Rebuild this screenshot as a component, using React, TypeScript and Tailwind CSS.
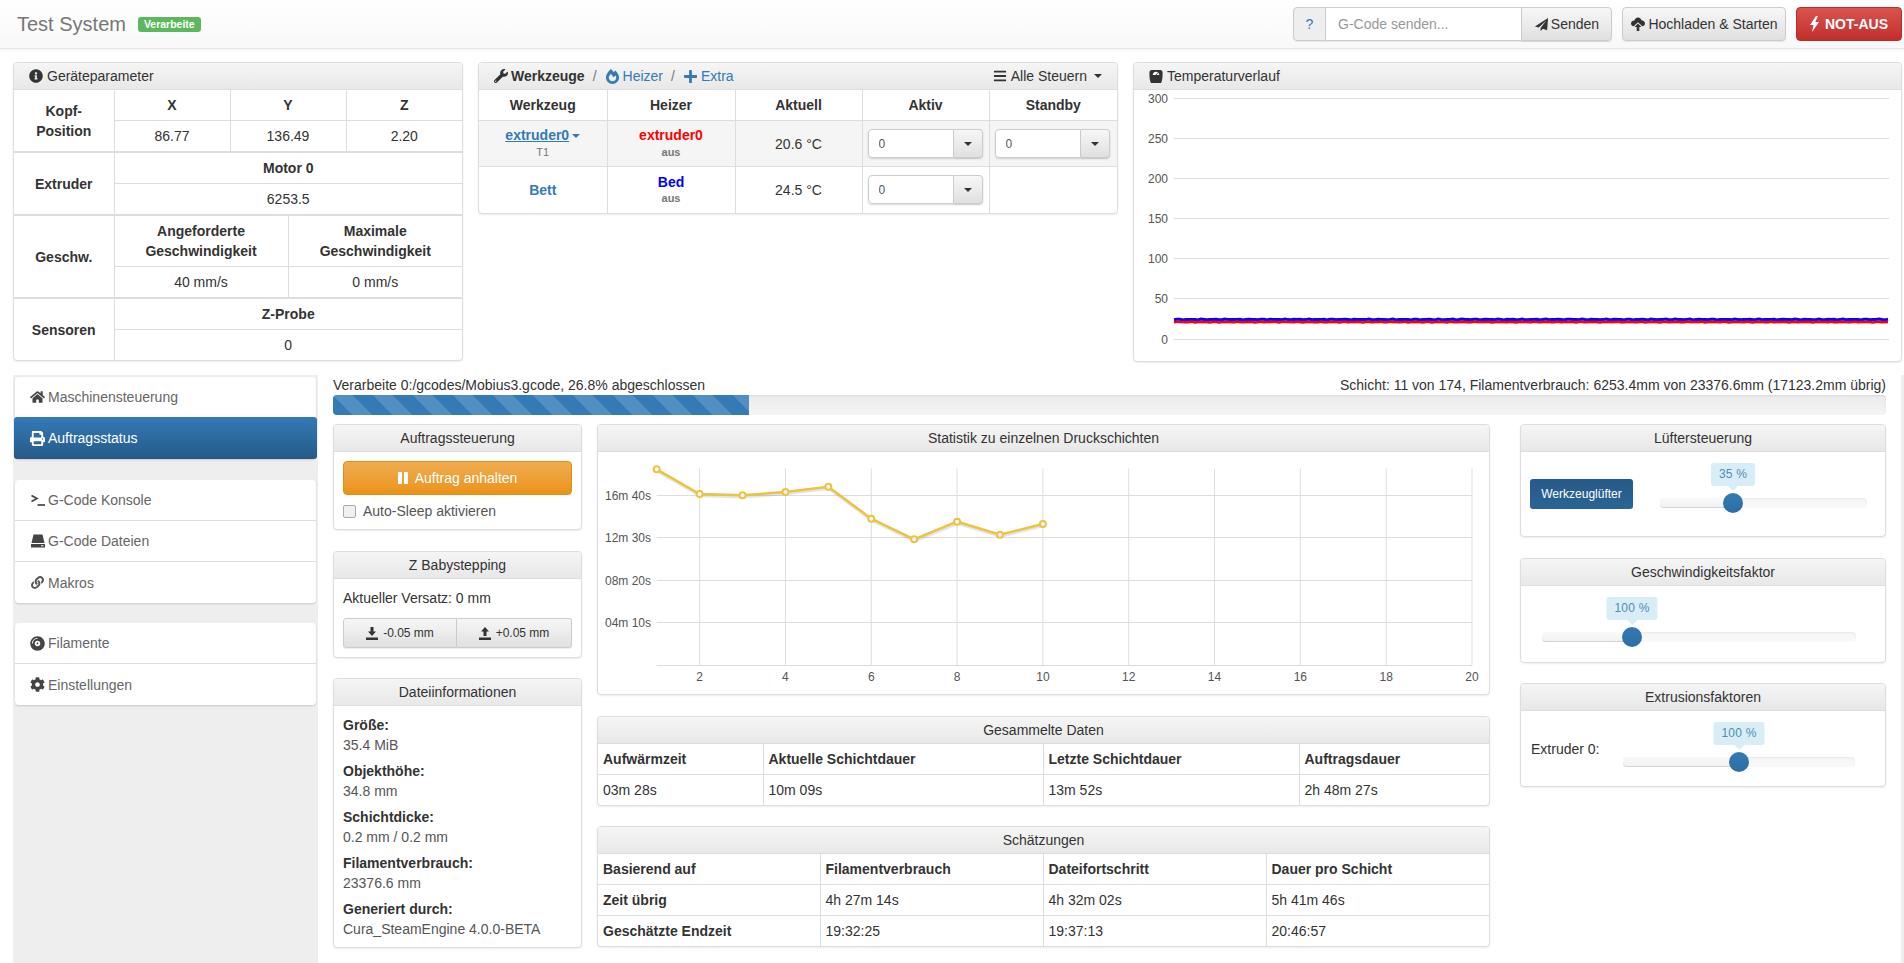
import type { ReactNode } from "react"
import { FaBars, FaCog, FaCompactDisc, FaFireAlt, FaHome, FaInfoCircle, FaLink, FaPlus, FaPrint, FaWrench } from "react-icons/fa"

const heading = "h-[27px] border-b border-[#ddd] bg-gradient-to-b from-[#f5f5f5] to-[#e8e8e8] rounded-t-[3px] leading-[26px]"
const panel = "rounded-[4px] border border-[#ddd] bg-white shadow-[0_1px_2px_rgba(0,0,0,0.075)]"
const tableCls =
  "w-full table-fixed border-collapse [&_td]:border [&_td]:border-[#ddd] [&_td]:p-[5px] [&_th]:border [&_th]:border-[#ddd] [&_th]:p-[5px] [&_tr>*:first-child]:border-l-0 [&_tr>*:last-child]:border-r-0 [&_tr:first-child>*]:border-t-0 [&_tbody:last-child_tr:last-child>*]:border-b-0"
const btnDefault =
  "flex items-center justify-center border border-[#ccc] bg-gradient-to-b from-[#f7f7f7] to-[#e0e0e0] text-[#333] shadow-[0_1px_1px_rgba(0,0,0,0.075)]"

function Caret({ className = "border-t-[#333]" }: { className?: string }) {
  return <span className={`inline-block h-0 w-0 border-x-[4px] border-t-[4px] border-x-transparent ${className}`} />
}

function GaugeIcon() {
  return (
    <svg viewBox="0 0 14 16" className="h-[15px] w-[14px]">
      <path d="M2.5 1h9C13 1 14 2 14 3.5V7c0 3-.6 5.5-1.2 7-.3.8-1 1-1.8 1H3c-.8 0-1.5-.2-1.8-1C.6 12.5 0 10 0 7V3.5C0 2 1 1 2.5 1z" fill="#333" />
      <path d="M3.5 6.5C3.5 4.5 5 3 7 3s3.5 1.5 3.5 3.5z" fill="#fff" />
      <path d="M6.5 6.2 9 3.8l.5.5L7.3 6.5z" fill="#333" />
    </svg>
  )
}

function SendIcon() {
  return (
    <svg viewBox="0 0 16 16" className="h-[15px] w-[15px]" fill="#333">
      <path d="M15 1 1 10l4 1.2L13 4 7 11.8V15l2.5-2.500 4.500 1.500z" />
    </svg>
  )
}

function CloudUpIcon() {
  return (
    <svg viewBox="0 0 16 16" className="h-[16px] w-[16px]" fill="#333">
      <path d="M8 1.500c2 0 3.200 1.500 3.400 2.800 1.800 0 3.600 1.300 3.600 3.200 0 1.700-1.400 2.800-2.700 2.800L8 6.200l-4.300 4.100C2.200 10.300 1 9 1 7.500 1 5.700 2.700 4.500 4.400 4.500 4.800 3 6.200 1.500 8 1.500z" />
      <path d="m8 7.500 3.500 3.500H9.300v4H6.700v-4H4.500z" />
    </svg>
  )
}

function BoltIcon() {
  return (
    <svg viewBox="0 0 9 16" className="h-[16px] w-[9px]" fill="#fff">
      <path d="M6 0 0 9h3.500L2 16l7-10H5.300L8 0z" />
    </svg>
  )
}

function ConsoleIcon() {
  return (
    <svg viewBox="0 0 14 14" className="h-[14px] w-[14px]" fill="none" stroke="#444" strokeWidth="1.7">
      <path d="M0.500 2.500 6 5.500 0.500 8.500" />
      <path d="M6.500 12h7.500" />
    </svg>
  )
}

function HddIcon() {
  return (
    <svg viewBox="0 0 14 14" className="h-[14px] w-[14px]" fill="#444">
      <path d="M2.500 0.500h9L13.500 9h-13z" />
      <path d="M0 10h14v3.500H0zM10 11.200v1h2.500v-1z" fillRule="evenodd" />
    </svg>
  )
}

function TrayArrow({ up }: { up?: boolean }) {
  return (
    <svg viewBox="0 0 12 13" className="h-[13px] w-[12px]" fill="#333">
      <path d={up ? "M6 0 10 4.500H7.500V9h-3V4.500H2z" : "M4.500 0h3v4.500H10L6 9 2 4.500h2.500z"} />
      <path d="M0 10.500h12V13H0z" />
    </svg>
  )
}

function Panel({ title, className = "", children }: { title: ReactNode; className?: string; children: ReactNode }) {
  return (
    <div className={`${panel} ${className}`}>
      <div className={`${heading} text-center`}>{title}</div>
      {children}
    </div>
  )
}

function SelectBox() {
  return (
    <div className="flex h-[29px] w-[115px] rounded-[4px] shadow-[0_1px_2px_rgba(0,0,0,0.15)]">
      <input
        defaultValue="0"
        className="h-full w-[86px] rounded-l-[4px] border border-[#ccc] bg-white px-[10px] text-[12px] text-[#555] outline-none"
      />
      <div className={`${btnDefault} h-full w-[29px] rounded-r-[4px] border-l-0`}>
        <Caret />
      </div>
    </div>
  )
}

function Slider({ label, width, pos, left }: { label: string; width: number; pos: number; left: number }) {
  return (
    <div
      className="relative mt-[46px] h-[10px] shrink-0 rounded-[4px] bg-gradient-to-b from-[#f5f5f5] to-[#f9f9f9] shadow-[inset_0_1px_2px_rgba(0,0,0,0.06)]"
      style={{ width, marginLeft: left }}
    >
      <div
        className="absolute inset-y-0 left-0 rounded-l-[4px] bg-gradient-to-b from-[#f9f9f9] to-[#f2f2f2] shadow-[inset_0_-1px_0_rgba(0,0,0,0.12)]"
        style={{ width: pos }}
      />
      <div
        className="absolute top-[-5px] h-5 w-5 -translate-x-1/2 rounded-full bg-gradient-to-b from-[#337ab7] to-[#2e6da4]"
        style={{ left: pos }}
      />
      <div
        className="absolute top-[-35.500px] flex h-[23px] -translate-x-1/2 items-center whitespace-nowrap rounded-[3px] bg-[#d9edf7] px-2 text-[12px] tracking-[0.2px] text-[#4f8db3]"
        style={{ left: pos }}
      >
        {label}
        <span className="absolute left-1/2 top-[23px] h-0 w-0 -translate-x-1/2 border-x-[5px] border-t-[5px] border-x-transparent border-t-[#d9edf7]" />
      </div>
    </div>
  )
}

function TempChart() {
  const grid = [
    { label: "300", y: 8.5 },
    { label: "250", y: 48.5 },
    { label: "200", y: 88.5 },
    { label: "150", y: 128.5 },
    { label: "100", y: 168.5 },
    { label: "50", y: 208.5 },
    { label: "0", y: 249.5 },
  ]
  const noisy = (base: number, seed: number) => {
    const pts: string[] = []
    for (let x = 40; x <= 755; x += 3) {
      const n = Math.sin(x * 0.9 + seed) * Math.cos(x * 0.37 + seed)
      pts.push(`${x},${(base + n * 0.5).toFixed(1)}`)
    }
    return pts.join(" ")
  }
  return (
    <svg width={767} height={271} className="block">
      {grid.map((g) => (
        <g key={g.label}>
          <line x1={40} x2={755} y1={g.y} y2={g.y} stroke="#ddd" strokeWidth={1.2} />
          <text x={34} y={g.y + 4} textAnchor="end" fontSize={12} fill="#545454">
            {g.label}
          </text>
        </g>
      ))}
      <polyline points={noisy(232.6, 2)} fill="none" stroke="#000" strokeOpacity={0.1} strokeWidth={3} />
      <polyline points={noisy(229.5, 1)} fill="none" stroke="#00f" strokeWidth={3} />
      <polyline points={noisy(232, 3)} fill="none" stroke="#f00" strokeWidth={2.5} />
    </svg>
  )
}

function LayerChart() {
  const step = (874 - 58.7) / 19
  const xAt = (n: number) => 58.7 + (n - 1) * step
  const gridY = [
    { label: "16m 40s", y: 43.5 },
    { label: "12m 30s", y: 85.5 },
    { label: "08m 20s", y: 128.5 },
    { label: "04m 10s", y: 170.5 },
  ]
  const values = [17.3, 42, 43.3, 40, 34.7, 66.7, 87.3, 69.7, 82.7, 72]
  const ticks = [2, 4, 6, 8, 10, 12, 14, 16, 18, 20]
  const line = values.map((y, i) => `${xAt(i + 1)},${y}`).join(" ")
  const shadow = values.map((y, i) => `${xAt(i + 1) + 0.5},${y + 2}`).join(" ")
  return (
    <svg width={891} height={242} className="block">
      {gridY.map((g) => (
        <g key={g.label}>
          <line x1={58.7} x2={874} y1={g.y} y2={g.y} stroke="#ddd" strokeWidth={1.2} />
          <text x={53} y={g.y + 4} textAnchor="end" fontSize={12} fill="#545454">
            {g.label}
          </text>
        </g>
      ))}
      {ticks.map((t) => (
        <g key={t}>
          <line x1={xAt(t)} x2={xAt(t)} y1={16.5} y2={213} stroke="#ddd" strokeWidth={1} />
          <text x={xAt(t)} y={229} textAnchor="middle" fontSize={12} fill="#545454">
            {t}
          </text>
        </g>
      ))}
      <line x1={58.7} x2={874} y1={213.5} y2={213.5} stroke="#ddd" strokeWidth={1.2} />
      <polyline points={shadow} fill="none" stroke="#000" strokeOpacity={0.1} strokeWidth={2.5} />
      <polyline points={line} fill="none" stroke="#edc240" strokeWidth={2.5} />
      {values.map((y, i) => (
        <circle key={i} cx={xAt(i + 1)} cy={y} r={3} fill="#fff" stroke="#edc240" strokeWidth={2} />
      ))}
    </svg>
  )
}

function NavItem({ icon, label, active, last, first }: { icon: ReactNode; label: string; active?: boolean; last?: boolean; first?: boolean }) {
  return (
    <div
      className={
        active
          ? "-mx-px flex h-[42px] items-center gap-[3px] rounded-[3px] bg-gradient-to-b from-[#337ab7] to-[#265a88] pl-[16px] text-white"
          : `flex ${first ? "h-[40px]" : "h-[41px]"} items-center gap-[3px] pl-[15px] text-[#666] ${last ? "" : "border-b border-[#ddd]"}`
      }
    >
      <span className="flex w-[15px] justify-center">{icon}</span>
      {label}
    </div>
  )
}

export default function App() {
  const navGroup = "mx-[2px] rounded-[4px] bg-white shadow-[0_1px_2px_rgba(0,0,0,0.15)]"
  const info = [
    ["Größe:", "35.4 MiB"],
    ["Objekthöhe:", "34.8 mm"],
    ["Schichtdicke:", "0.2 mm / 0.2 mm"],
    ["Filamentverbrauch:", "23376.6 mm"],
    ["Generiert durch:", "Cura_SteamEngine 4.0.0-BETA"],
  ]

  return (
    <div className="flex h-screen flex-col overflow-hidden bg-white font-['Liberation_Sans',Arial,sans-serif] text-[14px] leading-5 text-[#333]">
      {/* top bar */}
      <header className="flex h-[49px] shrink-0 items-center border-b border-[#e7e7e7] bg-gradient-to-b from-white to-[#f8f8f8] pl-[17px] pr-[2px] shadow-[0_1px_3px_rgba(0,0,0,0.05)]">
        <span className="text-[20px] text-[#777]">Test System</span>
        <span className="ml-[12px] rounded-[3px] bg-[#5cb85c] px-[6px] text-[10.500px] font-bold leading-[15px] text-white">Verarbeite</span>
        <div className="ml-auto flex h-[34px] rounded-[4px] shadow-[0_1px_1px_rgba(0,0,0,0.075)]">
          <div className="flex w-[33px] items-center justify-center rounded-l-[4px] border border-[#ccc] bg-[#eee] text-[#337ab7]">?</div>
          <input placeholder="G-Code senden..." className="w-[195px] border-y border-[#ccc] bg-white px-3 text-[14px] outline-none placeholder:text-[#999]" />
          <div className={`${btnDefault} w-[91px] gap-[2px] rounded-r-[4px]`}>
            <SendIcon />
            Senden
          </div>
        </div>
        <div className={`${btnDefault} ml-[10px] h-[34px] w-[164px] gap-[2px] rounded-[4px]`}>
          <CloudUpIcon />
          Hochladen &amp; Starten
        </div>
        <div className="ml-[10px] flex h-[34px] w-[106px] items-center justify-center gap-[6px] rounded-[4px] border border-[#b92c28] bg-gradient-to-b from-[#d9534f] to-[#c12e2a] font-bold text-white">
          <BoltIcon />
          NOT-AUS
        </div>
      </header>

      {/* upper panels */}
      <div className="mt-[13px] flex h-[300px] shrink-0 items-start gap-[15px] pl-[13px]">
        <div className={`${panel} w-[450px]`}>
          <div className={`${heading} flex items-center gap-[4px] pl-[15px] text-[#333]`}>
            <FaInfoCircle size={14} />
            Geräteparameter
          </div>
          <table className={`${tableCls} text-center`}>
            <colgroup>
              <col className="w-[100px]" />
              <col className="w-[116px]" />
              <col className="w-[58px]" />
              <col className="w-[58px]" />
              <col />
            </colgroup>
            <tbody>
              <tr>
                <th rowSpan={2}>Kopf-<br />Position</th>
                <th>X</th>
                <th colSpan={2}>Y</th>
                <th>Z</th>
              </tr>
              <tr>
                <td>86.77</td>
                <td colSpan={2}>136.49</td>
                <td>2.20</td>
              </tr>
            </tbody>
            <tbody className="border-t-2 border-[#ddd]">
              <tr>
                <th rowSpan={2}>Extruder</th>
                <th colSpan={4}>Motor 0</th>
              </tr>
              <tr>
                <td colSpan={4}>6253.5</td>
              </tr>
            </tbody>
            <tbody className="border-t-2 border-[#ddd]">
              <tr>
                <th rowSpan={2}>Geschw.</th>
                <th colSpan={2}>Angeforderte Geschwindigkeit</th>
                <th colSpan={2}>Maximale Geschwindigkeit</th>
              </tr>
              <tr>
                <td colSpan={2}>40 mm/s</td>
                <td colSpan={2}>0 mm/s</td>
              </tr>
            </tbody>
            <tbody className="border-t-2 border-[#ddd]">
              <tr>
                <th rowSpan={2} className="!border-b-0">Sensoren</th>
                <th colSpan={4}>Z-Probe</th>
              </tr>
              <tr>
                <td colSpan={4}>0</td>
              </tr>
            </tbody>
          </table>
        </div>

        <div className={`${panel} w-[640px]`}>
          <div className={`${heading} flex items-center pl-[15px] pr-[15px]`}>
            <FaWrench size={14} />
            <b className="ml-[3px]">Werkzeuge</b>
            <span className="mx-[8px] text-[#777]">/</span>
            <FaFireAlt size={15} className="text-[#337ab7]" />
            <span className="ml-[3px] text-[#337ab7]">Heizer</span>
            <span className="mx-[8px] text-[#777]">/</span>
            <FaPlus size={15} className="text-[#337ab7]" />
            <span className="ml-[3px] text-[#337ab7]">Extra</span>
            <span className="ml-auto flex items-center gap-[4px]">
              <FaBars size={14} />
              Alle Steuern
              <Caret className="ml-[3px] border-t-[#333]" />
            </span>
          </div>
          <table className={`${tableCls} text-center`}>
            <colgroup>
              <col className="w-[128px]" />
              <col className="w-[128px]" />
              <col className="w-[127px]" />
              <col className="w-[127px]" />
              <col />
            </colgroup>
            <tbody>
              <tr>
                <th>Werkzeug</th>
                <th>Heizer</th>
                <th>Aktuell</th>
                <th>Aktiv</th>
                <th>Standby</th>
              </tr>
              <tr className="h-[46px] bg-[#f5f5f5]">
                <td className="!py-0 leading-4">
                  <span className="font-bold text-[#337ab7] underline">extruder0</span>
                  <Caret className="ml-[3px] align-middle border-t-[#337ab7]" />
                  <div className="mt-px text-[11px] text-[#777]">T1</div>
                </td>
                <td className="!py-0 leading-4">
                  <div className="font-bold text-[#f00]">extruder0</div>
                  <div className="mt-px text-[11px] font-bold text-[#777]">aus</div>
                </td>
                <td>20.6 °C</td>
                <td><SelectBox /></td>
                <td><SelectBox /></td>
              </tr>
              <tr className="h-[46px]">
                <td className="font-bold text-[#337ab7]">Bett</td>
                <td className="!py-0 leading-4">
                  <div className="font-bold text-[#00f]">Bed</div>
                  <div className="text-[11px] font-bold text-[#777]">aus</div>
                </td>
                <td>24.5 °C</td>
                <td><SelectBox /></td>
                <td></td>
              </tr>
            </tbody>
          </table>
        </div>

        <div className={`${panel} w-[769px]`}>
          <div className={`${heading} flex items-center gap-[4px] pl-[15px]`}>
            <GaugeIcon />
            Temperaturverlauf
          </div>
          <TempChart />
        </div>
      </div>

      {/* lower area */}
      <div className="mt-[13px] flex min-h-0 flex-1 pl-[13px]">
        <aside className="w-[305px] shrink-0 bg-[#eee] pt-[2px]">
          <div className={navGroup}>
            <NavItem icon={<FaHome size={16} color="#444" />} label="Maschinensteuerung" first last />
            <NavItem icon={<FaPrint size={15} />} label="Auftragsstatus" active />
          </div>
          <div className={`${navGroup} mt-[21px]`}>
            <NavItem icon={<ConsoleIcon />} label="G-Code Konsole" />
            <NavItem icon={<HddIcon />} label="G-Code Dateien" />
            <NavItem icon={<FaLink size={13} color="#555" />} label="Makros" last />
          </div>
          <div className={`${navGroup} mt-[20px]`}>
            <NavItem icon={<FaCompactDisc size={15} color="#444" />} label="Filamente" />
            <NavItem icon={<FaCog size={15} color="#444" />} label="Einstellungen" last />
          </div>
        </aside>

        <main className="ml-[15px] w-[1553px] shrink-0">
          <div className="flex justify-between">
            <span>Verarbeite 0:/gcodes/Mobius3.gcode, 26.8% abgeschlossen</span>
            <span>Schicht: 11 von 174, Filamentverbrauch: 6253.4mm von 23376.6mm (17123.2mm übrig)</span>
          </div>
          <div className="h-5 overflow-hidden rounded-[4px] bg-gradient-to-b from-[#ebebeb] to-[#f5f5f5] shadow-[inset_0_1px_2px_rgba(0,0,0,0.08)]">
            <div className="h-full w-[26.8%] bg-[#337ab7] bg-[linear-gradient(45deg,rgba(255,255,255,0.15)_25%,transparent_25%,transparent_50%,rgba(255,255,255,0.15)_50%,rgba(255,255,255,0.15)_75%,transparent_75%,transparent)] bg-[length:40px_40px]" />
          </div>

          <div className="mt-[9px] flex items-start">
            {/* left column */}
            <div className="w-[249px] shrink-0">
              <Panel title="Auftragssteuerung">
                <div className="h-[77px] px-[9px] pt-[9px]">
                  <div className="flex h-[34px] items-center justify-center gap-[7px] rounded-[4px] border border-[#e38d13] bg-gradient-to-b from-[#f0ad4e] to-[#eb9316] text-white">
                    <span className="flex gap-[2px]">
                      <span className="h-[12px] w-[4px] bg-white" />
                      <span className="h-[12px] w-[4px] bg-white" />
                    </span>
                    Auftrag anhalten
                  </div>
                  <label className="mt-[6px] flex items-center gap-[7px] text-[#555]">
                    <input type="checkbox" className="h-[13px] w-[13px] appearance-none rounded-[2px] border border-[#aaa] bg-[#f0f0f0]" />
                    Auto-Sleep aktivieren
                  </label>
                </div>
              </Panel>
              <Panel title="Z Babystepping" className="mt-[21px]">
                <div className="h-[78px] px-[9px] pt-[9px]">
                  Aktueller Versatz: 0 mm
                  <div className="mt-[10px] flex h-[30px] text-[12px]">
                    <div className={`${btnDefault} w-[114px] gap-[5px] rounded-l-[3px]`}>
                      <TrayArrow />
                      -0.05 mm
                    </div>
                    <div className={`${btnDefault} flex-1 gap-[5px] rounded-r-[3px] border-l-0`}>
                      <TrayArrow up />
                      +0.05 mm
                    </div>
                  </div>
                </div>
              </Panel>
              <Panel title="Dateiinformationen" className="mt-[20px]">
                <div className="px-[9px] pb-[2px] pt-[9px]">
                  {info.map(([k, v]) => (
                    <div key={k} className="mb-[6px]">
                      <div className="font-bold">{k}</div>
                      <div className="text-[#555]">{v}</div>
                    </div>
                  ))}
                </div>
              </Panel>
            </div>

            {/* middle column */}
            <div className="ml-[15px] w-[893px] shrink-0">
              <Panel title="Statistik zu einzelnen Druckschichten">
                <LayerChart />
              </Panel>
              <Panel title="Gesammelte Daten" className="mt-[21px]">
                <table className={`${tableCls} text-left`}>
                  <colgroup>
                    <col className="w-[165px]" />
                    <col className="w-[280px]" />
                    <col className="w-[256px]" />
                    <col />
                  </colgroup>
                  <tbody>
                    <tr>
                      <th>Aufwärmzeit</th>
                      <th>Aktuelle Schichtdauer</th>
                      <th>Letzte Schichtdauer</th>
                      <th>Auftragsdauer</th>
                    </tr>
                    <tr>
                      <td>03m 28s</td>
                      <td>10m 09s</td>
                      <td>13m 52s</td>
                      <td>2h 48m 27s</td>
                    </tr>
                  </tbody>
                </table>
              </Panel>
              <Panel title="Schätzungen" className="mt-[20px]">
                <table className={`${tableCls} text-left`}>
                  <colgroup>
                    <col className="w-[222px]" />
                    <col className="w-[223px]" />
                    <col className="w-[223px]" />
                    <col />
                  </colgroup>
                  <tbody>
                    <tr>
                      <th>Basierend auf</th>
                      <th>Filamentverbrauch</th>
                      <th>Dateifortschritt</th>
                      <th>Dauer pro Schicht</th>
                    </tr>
                    <tr>
                      <th>Zeit übrig</th>
                      <td>4h 27m 14s</td>
                      <td>4h 32m 02s</td>
                      <td>5h 41m 46s</td>
                    </tr>
                    <tr>
                      <th>Geschätzte Endzeit</th>
                      <td>19:32:25</td>
                      <td>19:37:13</td>
                      <td>20:46:57</td>
                    </tr>
                  </tbody>
                </table>
              </Panel>
            </div>

            {/* right column */}
            <div className="ml-[30px] w-[366px] shrink-0">
              <Panel title="Lüftersteuerung">
                <div className="flex h-[84px] items-start">
                  <div className="ml-[9px] mt-[27px] flex h-[30px] w-[103px] shrink-0 items-center justify-center rounded-[3px] bg-gradient-to-b from-[#265a88] to-[#2a6496] text-[12px] text-white">
                    Werkzeuglüfter
                  </div>
                  <Slider label="35 %" width={207} pos={73} left={27} />
                </div>
              </Panel>
              <Panel title="Geschwindigkeitsfaktor" className="mt-[21px]">
                <div className="flex h-[76px] items-start">
                  <Slider label="100 %" width={314} pos={90} left={21} />
                </div>
              </Panel>
              <Panel title="Extrusionsfaktoren" className="mt-[20px]">
                <div className="flex h-[75px] items-start">
                  <span className="ml-[10px] mt-[28px] w-[92px] shrink-0">Extruder 0:</span>
                  <Slider label="100 %" width={232} pos={116} left={0} />
                </div>
              </Panel>
            </div>
          </div>
        </main>
        <div className="ml-[15px] w-[3px] bg-[#eee]" />
      </div>
    </div>
  )
}
